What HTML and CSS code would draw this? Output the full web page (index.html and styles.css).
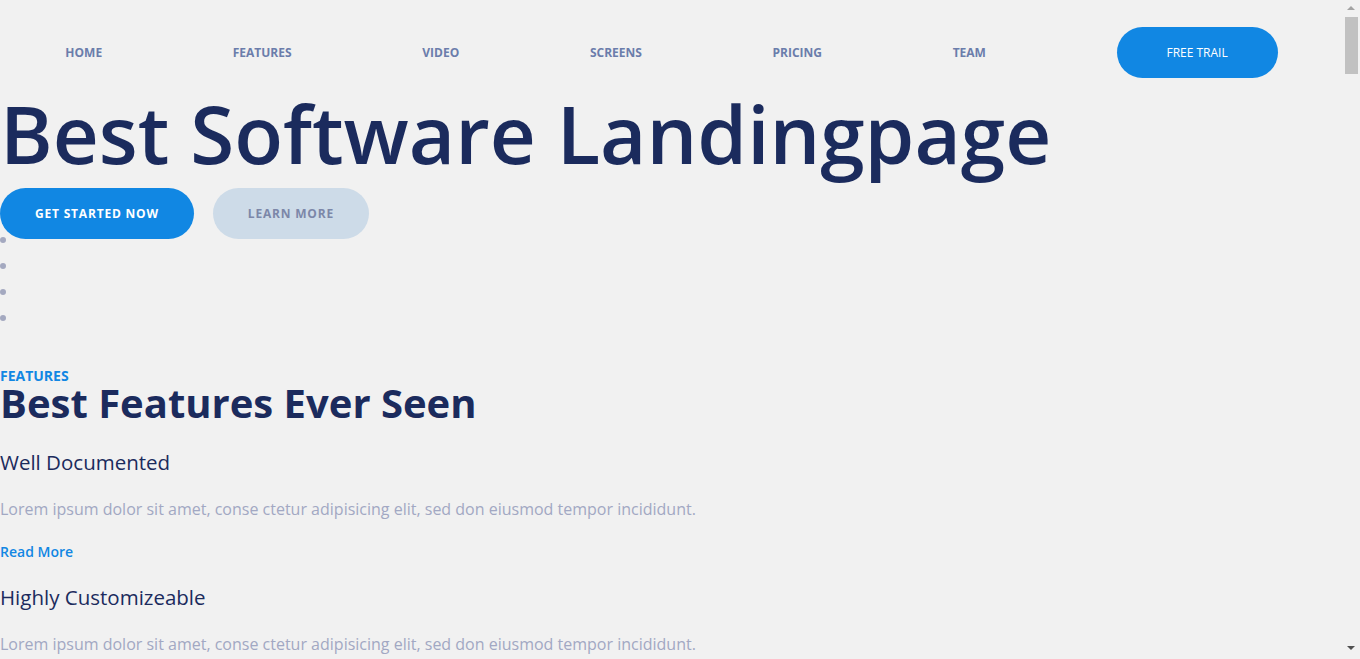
FILE: index.html
```html
<!DOCTYPE html>
<html lang="en">
<head>
<meta charset="utf-8">
<title>Best Software Landingpage</title>
<link rel="stylesheet" href="styles.css">
</head>
<body>
<header class="nav">
  <a class="nav-link" href="#">HOME</a>
  <a class="nav-link" href="#">FEATURES</a>
  <a class="nav-link" href="#">VIDEO</a>
  <a class="nav-link" href="#">SCREENS</a>
  <a class="nav-link" href="#">PRICING</a>
  <a class="nav-link" href="#">TEAM</a>
  <a class="nav-trial" href="#">FREE TRAIL</a>
</header>

<section class="hero">
  <h1 class="hero-title">Best Software Landingpage</h1>
  <div class="hero-actions">
    <a class="btn btn-primary" href="#">GET STARTED NOW</a>
    <a class="btn btn-light" href="#">LEARN MORE</a>
  </div>
  <ul class="dots">
    <li></li>
    <li></li>
    <li></li>
    <li></li>
  </ul>
</section>

<section class="features">
  <div class="eyebrow">FEATURES</div>
  <h2 class="section-title">Best Features Ever Seen</h2>
  <div class="feature">
    <h3 class="feature-title">Well Documented</h3>
    <p class="feature-text">Lorem ipsum dolor sit amet, conse ctetur adipisicing elit, sed don eiusmod tempor incididunt.</p>
    <a class="read-more" href="#">Read More</a>
  </div>
  <div class="feature">
    <h3 class="feature-title">Highly Customizeable</h3>
    <p class="feature-text">Lorem ipsum dolor sit amet, conse ctetur adipisicing elit, sed don eiusmod tempor incididunt.</p>
    <a class="read-more" href="#">Read More</a>
  </div>
  <div class="feature">
    <h3 class="feature-title">Responsive Design</h3>
    <p class="feature-text">Lorem ipsum dolor sit amet, conse ctetur adipisicing elit, sed don eiusmod tempor incididunt.</p>
    <a class="read-more" href="#">Read More</a>
  </div>
</section>

<div class="scrollbar" aria-hidden="true">
  <span class="scroll-up"></span>
  <span class="scroll-thumb"></span>
  <span class="scroll-down"></span>
</div>
</body>
</html>
```

FILE: styles.css
```css
html, body {
  margin: 0;
  padding: 0;
}

body {
  background: #f1f1f1;
  font-family: "Open Sans", "Liberation Sans", sans-serif;
  color: #1b2b5d;
  margin-right: 17px;
}

a {
  text-decoration: none;
}

.nav {
  display: flex;
  justify-content: space-around;
  align-items: center;
  padding-top: 27px;
  height: 51px;
}

.nav-link {
  font-size: 12px;
  font-weight: 700;
  color: #6b7dab;
}

.nav-trial {
  display: flex;
  align-items: center;
  justify-content: center;
  width: 161px;
  height: 51px;
  border-radius: 26px;
  background: #1187e3;
  color: #ffffff;
  font-size: 12px;
  font-weight: 400;
}

.hero-title {
  margin: 0;
  font-size: 80px;
  font-weight: 600;
  letter-spacing: 0;
  line-height: 110px;
  color: #1b2b5d;
}

.hero-actions {
  display: flex;
  gap: 19px;
}

.btn {
  display: flex;
  align-items: center;
  height: 51px;
  padding: 0 35px;
  border-radius: 26px;
  font-size: 12px;
  font-weight: 700;
  letter-spacing: 0.8px;
}

.btn-primary {
  background: #1187e3;
  color: #ffffff;
}

.btn-light {
  background: #cddbe8;
  color: #7c87a8;
}

.dots {
  list-style: none;
  margin: -2px 0 0;
  padding: 0;
}

.dots li {
  height: 26px;
}

.dots li::before {
  content: "";
  display: block;
  width: 6px;
  height: 6px;
  border-radius: 50%;
  background: #a4a9c0;
}

.features {
  padding-top: 25px;
  padding-bottom: 200px;
}

.eyebrow {
  font-size: 14px;
  font-weight: 700;
  color: #1187e3;
}

.section-title {
  margin: 0 0 5px;
  font-size: 40px;
  font-weight: 700;
  line-height: 36px;
  color: #1b2b5d;
}

.feature {
  display: flex;
  flex-direction: column;
  align-items: flex-start;
}

.feature-title {
  margin: 22px 0 0;
  font-size: 20.5px;
  font-weight: 500;
  color: #1b2b5d;
}

.feature-text {
  margin: 22px 0 0;
  font-size: 16px;
  color: #a2a8c3;
}

.read-more {
  margin-top: 22px;
  font-size: 14px;
  font-weight: 600;
  color: #1187e3;
}

/* browser-style scrollbar overlay */
.scrollbar {
  position: fixed;
  top: 0;
  right: 0;
  width: 17px;
  height: 100vh;
  background: #f1f1f1;
}

.scroll-up,
.scroll-down {
  position: absolute;
  left: 4px;
  width: 0;
  height: 0;
  border-left: 4px solid transparent;
  border-right: 4px solid transparent;
}

.scroll-up {
  top: 6px;
  border-bottom: 4px solid #a3a3a3;
}

.scroll-down {
  bottom: 9px;
  border-top: 4px solid #505050;
}

.scroll-thumb {
  position: absolute;
  top: 17px;
  left: 2px;
  width: 13px;
  height: 57px;
  background: #c1c1c1;
}
```
